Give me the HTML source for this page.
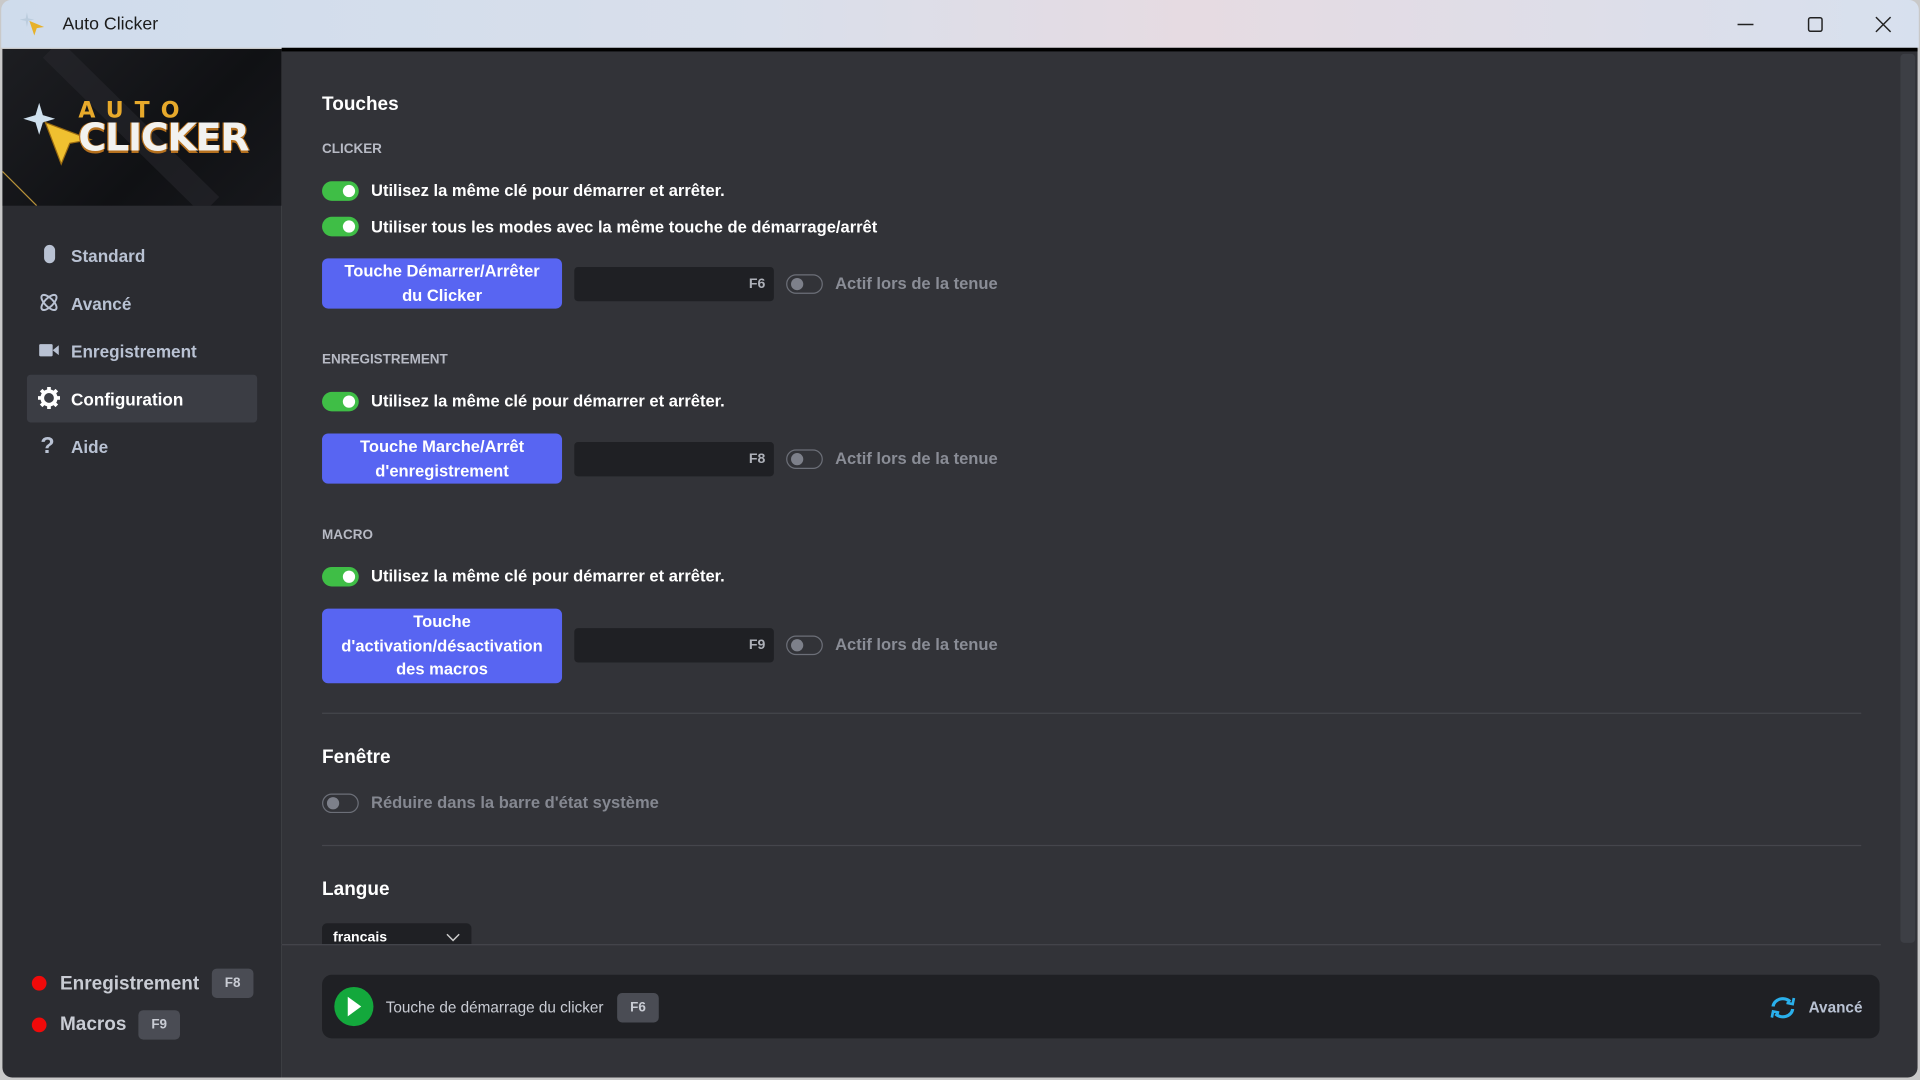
<!DOCTYPE html>
<html><head><meta charset="utf-8"><style>
*{margin:0;padding:0;box-sizing:border-box}
html,body{width:1920px;height:1080px;overflow:hidden;background:#c9c9c9}
#w{position:absolute;left:0;top:0;width:1568px;height:882px;transform:scale(1.22449);transform-origin:0 0;font-family:"Liberation Sans Narrow","Liberation Sans",sans-serif;font-weight:bold;color:#fff}
.a{position:absolute}
#tb{left:1px;top:0;width:1566px;height:39px;background:linear-gradient(90deg,#cfdcec 0%,#d9dfeb 40%,#e6dbe2 62%,#d7e0ee 100%);border-radius:8px 8px 0 0}
#tb .t{left:50px;top:12px;font-family:"Liberation Sans",sans-serif;font-weight:normal;font-size:14.5px;color:#1b1b1b}
#side{left:2px;top:40px;width:228px;height:840px;background:#2b2c31;border-radius:0 0 0 8px}
#logo{left:2px;top:40px;width:228px;height:128px;background:linear-gradient(135deg,#1d1e22 0%,#101114 60%,#17181c 100%);overflow:hidden}
#main{left:230px;top:40px;width:1336px;height:840px;background:#323338;border-radius:0 0 8px 0}
#topline{left:230px;top:39px;width:1336px;height:3px;background:#000}
.nav{left:58px;font-size:14px;color:#b9c2d3}
.navi{left:31px;width:18px;height:18px}
.h{left:263px;font-size:15.5px;color:#fff}
.sub{left:263px;font-size:11px;color:#b7bac4}
.tg{left:263px;width:30px;height:16px;border-radius:8px;background:#3fbe46}
.tg:after{content:"";position:absolute;right:3px;top:3px;width:10px;height:10px;border-radius:5px;background:#fff}
.tg.off{background:transparent;border:1px solid #6c6f78}
.tg.off:after{left:3px;right:auto;top:2px;background:#7d808a}
.lbl{left:303px;font-size:13.5px;color:#fff}
.btn{left:263px;width:196px;background:#5865f2;border-radius:5px;color:#fff;font-size:13.5px;text-align:center;line-height:19.5px;display:flex;align-items:center;justify-content:center}
.key{left:469px;width:163px;height:28px;background:#1f2024;border-radius:3px;font-size:11.5px;color:#aeb1b9;text-align:right;padding-right:7px;line-height:29px}
.tg2{left:642px}
.act{left:682px;font-size:13.5px;color:#8a8d96}
.hr{left:263px;width:1257px;height:1px;background:#45464c}
.bdg{background:#4a4c54;border-radius:4px;color:#c9ccd4;font-size:11px;text-align:center}
</style></head><body><div id="w">
<div class="a" id="tb"><svg class="a" style="left:15px;top:9px" width="22" height="22" viewBox="0 0 22 22"><path d="M6 1 L7 6 L12 7 L7 8 L6 13 L5 8 L0 7 L5 6Z" fill="#bcd"/><path d="M8 8 L20 13 L14 14 L12 20Z" fill="#e7b12a"/></svg><div class="a t">Auto Clicker</div>
<svg class="a" style="left:1415px;top:12px" width="135" height="16"><path d="M3 8H16" stroke="#222" stroke-width="1.2"/><rect x="61" y="2.5" width="11" height="11" rx="1.5" fill="none" stroke="#222" stroke-width="1.2"/><path d="M116 2L128 14M128 2L116 14" stroke="#222" stroke-width="1.2"/></svg></div>
<div class="a" id="side"></div>
<div class="a" id="main"></div>
<div class="a" id="topline"></div>
<div class="a" id="logo">
<svg class="a" style="left:0;top:0" width="228" height="128"><path d="M0 100 L28 128" stroke="#b8923a" stroke-width="1"/><path d="M40 0 L170 128" stroke="#2a2b30" stroke-width="20" opacity=".5"/>
<path d="M30 44 L33 54 L43 57 L33 60 L30 70 L27 60 L17 57 L27 54Z" fill="#cfe0ee"/>
<path d="M35 60 L72 74 L55 77 L48 94Z" fill="#f0c030" stroke="#9a6a10"/>
</svg>
<div class="a" style="left:62px;top:40px;font-family:'DejaVu Sans',sans-serif;font-size:18px;letter-spacing:9px;color:#e7a92b;font-weight:900">AUTO</div>
<div class="a" style="left:62px;top:55px;font-family:'DejaVu Sans',sans-serif;font-size:31px;color:#f2f2f0;font-weight:900;letter-spacing:-1px;text-shadow:0 2px 0 #b5701e,1px 0 0 #b5701e,-1px 0 0 #b5701e">CLICKER</div>
</div>
<svg class="a navi" style="top:199px" viewBox="0 0 18 18"><rect x="5" y="1" width="9" height="15" rx="4.5" fill="#b9c2d3"/></svg><div class="a nav" style="top:201px">Standard</div>
<svg class="a navi" style="top:238px" viewBox="0 0 18 18" fill="none" stroke="#b9c2d3" stroke-width="1.6"><ellipse cx="9" cy="9" rx="8" ry="3.5" transform="rotate(45 9 9)"/><ellipse cx="9" cy="9" rx="8" ry="3.5" transform="rotate(-45 9 9)"/></svg><div class="a nav" style="top:240px">Avancé</div>
<svg class="a navi" style="top:277px" viewBox="0 0 18 18"><rect x="1" y="4" width="11" height="10" rx="1" fill="#b9c2d3"/><path d="M12 9L17 5V13Z" fill="#b9c2d3"/></svg><div class="a nav" style="top:279px">Enregistrement</div>
<div class="a" style="left:22px;top:306px;width:188px;height:39px;background:#3b3d44;border-radius:3px"></div>
<svg class="a navi" style="top:316px" viewBox="0 0 18 18"><circle cx="9" cy="9" r="5.5" fill="none" stroke="#fff" stroke-width="3"/><path d="M9 0V4M9 14V18M0 9H4M14 9H18M2.6 2.6L5.5 5.5M12.5 12.5L15.4 15.4M2.6 15.4L5.5 12.5M12.5 5.5L15.4 2.6" stroke="#fff" stroke-width="3"/></svg><div class="a nav" style="top:318px;color:#fff">Configuration</div>
<div class="a" style="left:33px;top:354px;font-size:19px;color:#b9c2d3">?</div><div class="a nav" style="top:357px">Aide</div>
<div class="a" style="left:26px;top:797px;width:12px;height:12px;border-radius:6px;background:#f00a0a"></div><div class="a" style="left:49px;top:795px;font-size:15.5px;color:#c9ccd4">Enregistrement</div><div class="a bdg" style="left:173px;top:791px;width:34px;height:24px;line-height:24px">F8</div>
<div class="a" style="left:26px;top:831px;width:12px;height:12px;border-radius:6px;background:#f00a0a"></div><div class="a" style="left:49px;top:828px;font-size:15.5px;color:#c9ccd4">Macros</div><div class="a bdg" style="left:113px;top:825px;width:34px;height:24px;line-height:24px">F9</div>

<div class="a h" style="top:77px">Touches</div>
<div class="a sub" style="top:116px">CLICKER</div>
<div class="a tg" style="top:148px"></div><div class="a lbl" style="top:148px">Utilisez la même clé pour démarrer et arrêter.</div>
<div class="a tg" style="top:177px"></div><div class="a lbl" style="top:178px">Utiliser tous les modes avec la même touche de démarrage/arrêt</div>
<div class="a btn" style="top:211px;height:41px">Touche Démarrer/Arrêter<br>du Clicker</div>
<div class="a key" style="top:218px">F6</div><div class="a tg off tg2" style="top:224px"></div><div class="a act" style="top:224px">Actif lors de la tenue</div>
<div class="a sub" style="top:288px">ENREGISTREMENT</div>
<div class="a tg" style="top:320px"></div><div class="a lbl" style="top:320px">Utilisez la même clé pour démarrer et arrêter.</div>
<div class="a btn" style="top:354px;height:41px">Touche Marche/Arrêt<br>d'enregistrement</div>
<div class="a key" style="top:361px">F8</div><div class="a tg off tg2" style="top:367px"></div><div class="a act" style="top:367px">Actif lors de la tenue</div>
<div class="a sub" style="top:431px">MACRO</div>
<div class="a tg" style="top:463px"></div><div class="a lbl" style="top:463px">Utilisez la même clé pour démarrer et arrêter.</div>
<div class="a btn" style="top:497px;height:61px">Touche<br>d'activation/désactivation<br>des macros</div>
<div class="a key" style="top:513px">F9</div><div class="a tg off tg2" style="top:519px"></div><div class="a act" style="top:519px">Actif lors de la tenue</div>
<div class="a hr" style="top:582px"></div>
<div class="a h" style="top:610px">Fenêtre</div>
<div class="a tg off" style="top:648px"></div><div class="a lbl" style="top:648px;color:#858891">Réduire dans la barre d'état système</div>
<div class="a hr" style="top:690px"></div>
<div class="a h" style="top:718px">Langue</div>
<div class="a" style="left:263px;top:754px;width:122px;height:17px;background:#1f2024;border-radius:4px 4px 0 0;overflow:hidden"><div class="a" style="left:9px;top:6px;font-size:11.5px;color:#fff">francais</div><svg class="a" style="left:101px;top:8px" width="12" height="8"><path d="M1 1L6 6L11 1" fill="none" stroke="#ccc" stroke-width="1.2"/></svg></div>
<div class="a" style="left:230px;top:771px;width:1306px;height:1px;background:#45464c"></div>
<div class="a" style="left:1552px;top:44px;width:12px;height:726px;background:#3d3f45;border-radius:3px"></div>
<div class="a" style="left:263px;top:796px;width:1272px;height:52px;background:#1f2024;border-radius:8px"></div>
<div class="a" style="left:273px;top:806px;width:32px;height:32px;border-radius:16px;background:#13a83c"></div><svg class="a" style="left:283px;top:813px" width="14" height="18"><path d="M1 1L12 9L1 17Z" fill="#fff"/></svg>
<div class="a" style="left:315px;top:816px;font-size:12.5px;color:#c9ccd4;font-weight:normal">Touche de démarrage du clicker</div>
<div class="a bdg" style="left:504px;top:811px;width:34px;height:24px;line-height:24px">F6</div>
<svg class="a" style="left:1443px;top:812px" width="26" height="22" viewBox="0 0 26 22" fill="none" stroke="#2ab0ec" stroke-width="2.6"><path d="M5 10A8 7 0 0 1 19 6"/><path d="M21 12A8 7 0 0 1 7 16"/><path d="M16 7L21 8L22 3" stroke-width="2.2"/><path d="M10 15L5 14L4 19" stroke-width="2.2"/></svg>
<div class="a" style="left:1477px;top:816px;font-size:12.5px;color:#b9c2d3">Avancé</div>
</div></body></html>
